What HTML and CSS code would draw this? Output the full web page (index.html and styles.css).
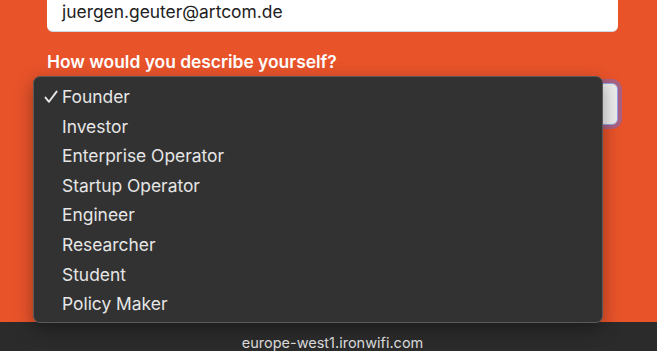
FILE: index.html
```html
<!DOCTYPE html>
<html>
<head>
<meta charset="utf-8">
<link rel="stylesheet" href="styles.css">
</head>
<body>
<div class="page">
  <main class="form">
    <div class="input email">juergen.geuter@artcom.de</div>
    <div class="label">How would you describe yourself?</div>
    <div class="input select focused"></div>
    <ul class="menu">
      <li class="item checked"><svg class="check" width="14" height="14" viewBox="0 0 14 14"><path d="M1.5 7.6 L5 11.8 L12.6 1.6" fill="none" stroke="#e6e6e6" stroke-width="1.9" stroke-linecap="round" stroke-linejoin="round"/></svg>Founder</li>
      <li class="item">Investor</li>
      <li class="item">Enterprise Operator</li>
      <li class="item">Startup Operator</li>
      <li class="item">Engineer</li>
      <li class="item">Researcher</li>
      <li class="item">Student</li>
      <li class="item">Policy Maker</li>
    </ul>
  </main>
  <footer class="status">europe-west1.ironwifi.com</footer>
</div>
</body>
</html>
```

FILE: styles.css
```css
html, body {
  margin: 0;
  padding: 0;
}
body {
  width: 657px;
  height: 351px;
  overflow: hidden;
  background: #e8532a;
  font-family: Inter, "Liberation Sans", sans-serif;
}
.page {
  display: flex;
  flex-direction: column;
  height: 351px;
}
.form {
  flex: 1;
  position: relative;
  padding: 0 39px 0 47px;
}
.input {
  box-sizing: border-box;
  background: #fff;
  border-radius: 6px;
  height: 42px;
}
.email {
  margin-top: -10px;
  padding: 11px 0 0 15px;
  font-size: 17.4px;
  line-height: 22px;
  color: #222;
  border-bottom: 1px solid #cfd6e4;
}
.label {
  margin-top: 19px;
  font-size: 17.4px;
  font-weight: 600;
  color: #fff;
  line-height: 22px;
}
.select {
  margin-top: 10px;
  border: 1px solid #8fa4e6;
  box-shadow: 0 0 0 4px rgba(120, 110, 200, 0.55);
  background: linear-gradient(to right, #fff, #ececec);
}
.menu {
  position: absolute;
  left: 33px;
  top: 76px;
  width: 570px;
  height: 247px;
  box-sizing: border-box;
  margin: 0;
  padding: 5px 0 0 0;
  list-style: none;
  background: #323232;
  border: 1px solid #5a5a5a;
  border-radius: 7px;
  box-shadow: 0 6px 18px rgba(0, 0, 0, 0.35);
  z-index: 2;
}
.item {
  position: relative;
  height: 29.6px;
  line-height: 29.6px;
  padding-left: 28px;
  font-size: 17.4px;
  color: #e6e6e6;
}
.check {
  position: absolute;
  left: 10px;
  top: 8px;
}
.status {
  height: 29px;
  box-sizing: border-box;
  background: #2b2b2b;
  color: #dcdcdc;
  font-size: 14.5px;
  text-align: center;
  line-height: 18px;
  padding: 12px 0 0 8px;
}
```
